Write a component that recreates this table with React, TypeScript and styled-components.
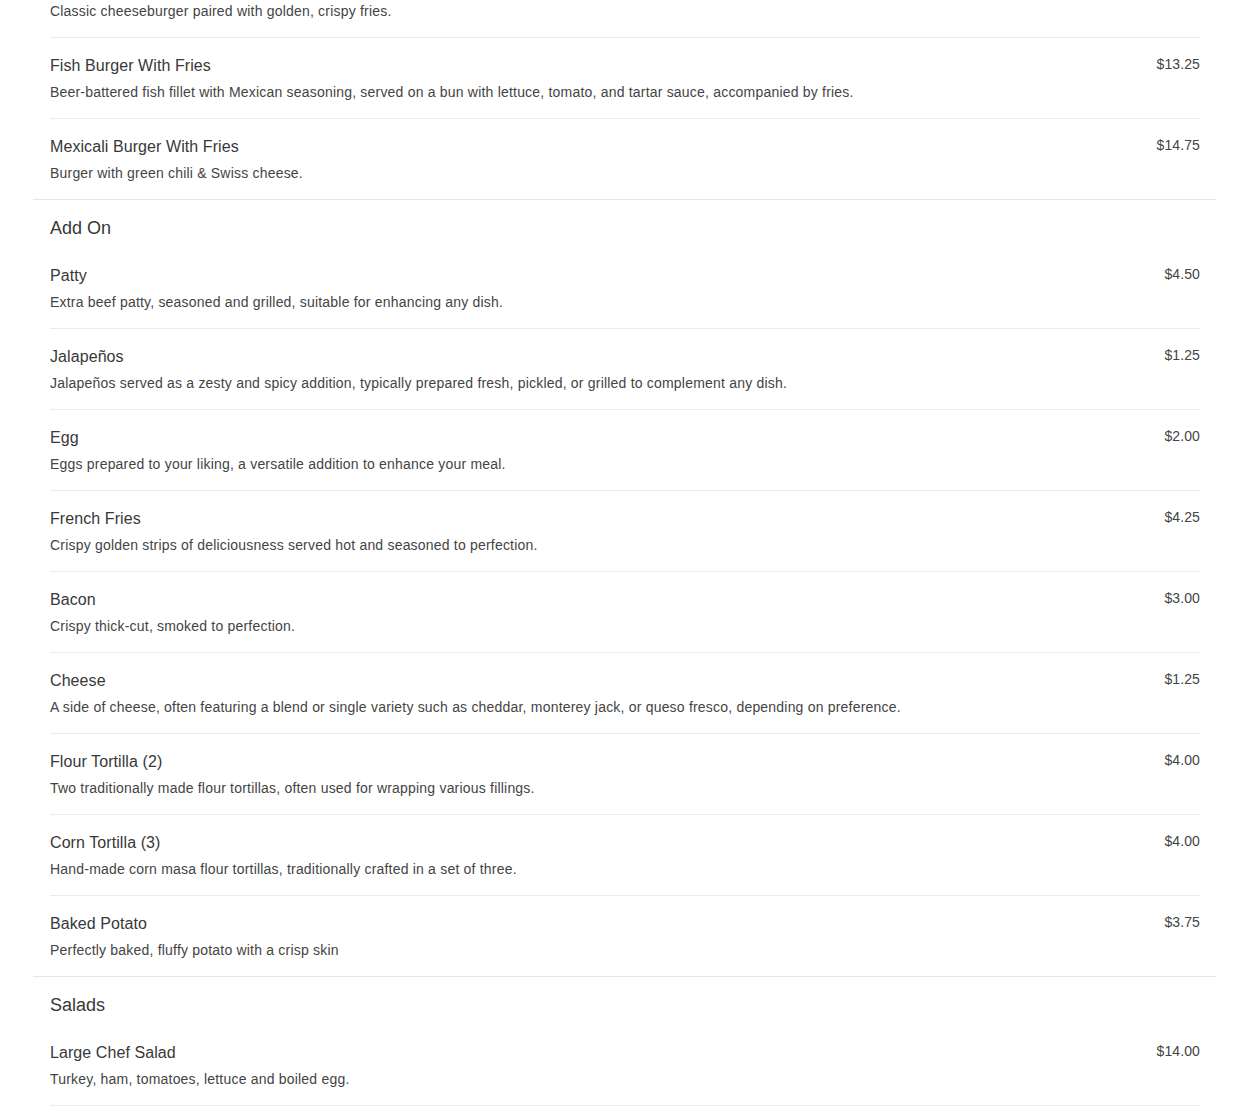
import React from 'react';
import styled, { createGlobalStyle } from 'styled-components';

const GlobalStyle = createGlobalStyle`
  html, body {
    margin: 0;
    padding: 0;
    background: #fff;
  }
  body {
    font-family: "Liberation Sans", Arial, Helvetica, sans-serif;
    color: #333;
    overflow: hidden;
  }
`;

const Page = styled.div`
  width: 1250px;
  height: 1115px;
  overflow: hidden;
`;

// the screenshot is scrolled part-way into the menu
const Menu = styled.div`
  margin: -43px 34px 0 33px;
`;

const Section = styled.section`
  border-bottom: 1px solid #e6e6e6;
`;

const SectionTitle = styled.h3`
  margin: 0;
  padding: 17px 17px 9px;
  font-size: 18px;
  line-height: 22px;
  font-weight: 400;
  color: #383838;
`;

const Items = styled.div`
  padding: 0 16px 0 17px;
`;

const Item = styled.div`
  display: flex;
  justify-content: space-between;
  align-items: flex-start;
  padding: 18px 0 16px;
  border-bottom: 1px solid #ebebeb;

  &:last-child {
    border-bottom: none;
  }
`;

const Info = styled.div`
  display: flex;
  flex-direction: column;
  gap: 6px;
`;

const Name = styled.div`
  font-size: 16px;
  line-height: 20px;
  letter-spacing: 0.08px;
  color: #383838;
`;

const Desc = styled.div`
  font-size: 14px;
  line-height: 20px;
  letter-spacing: 0.2px;
  color: #444;
`;

const Price = styled.div`
  font-size: 14px;
  line-height: 16px;
  letter-spacing: 0.1px;
  color: #444;
  white-space: nowrap;
`;

type MenuItem = { name: string; desc: string; price: string };
type MenuSection = { title?: string; items: MenuItem[] };

const sections: MenuSection[] = [
  {
    items: [
      { name: 'Cheeseburger With Fries', desc: 'Classic cheeseburger paired with golden, crispy fries.', price: '$13.50' },
      {
        name: 'Fish Burger With Fries',
        desc: 'Beer-battered fish fillet with Mexican seasoning, served on a bun with lettuce, tomato, and tartar sauce, accompanied by fries.',
        price: '$13.25',
      },
      { name: 'Mexicali Burger With Fries', desc: 'Burger with green chili & Swiss cheese.', price: '$14.75' },
    ],
  },
  {
    title: 'Add On',
    items: [
      { name: 'Patty', desc: 'Extra beef patty, seasoned and grilled, suitable for enhancing any dish.', price: '$4.50' },
      {
        name: 'Jalapeños',
        desc: 'Jalapeños served as a zesty and spicy addition, typically prepared fresh, pickled, or grilled to complement any dish.',
        price: '$1.25',
      },
      { name: 'Egg', desc: 'Eggs prepared to your liking, a versatile addition to enhance your meal.', price: '$2.00' },
      { name: 'French Fries', desc: 'Crispy golden strips of deliciousness served hot and seasoned to perfection.', price: '$4.25' },
      { name: 'Bacon', desc: 'Crispy thick-cut, smoked to perfection.', price: '$3.00' },
      {
        name: 'Cheese',
        desc: 'A side of cheese, often featuring a blend or single variety such as cheddar, monterey jack, or queso fresco, depending on preference.',
        price: '$1.25',
      },
      { name: 'Flour Tortilla (2)', desc: 'Two traditionally made flour tortillas, often used for wrapping various fillings.', price: '$4.00' },
      { name: 'Corn Tortilla (3)', desc: 'Hand-made corn masa flour tortillas, traditionally crafted in a set of three.', price: '$4.00' },
      { name: 'Baked Potato', desc: 'Perfectly baked, fluffy potato with a crisp skin', price: '$3.75' },
    ],
  },
  {
    title: 'Salads',
    items: [
      { name: 'Large Chef Salad', desc: 'Turkey, ham, tomatoes, lettuce and boiled egg.', price: '$14.00' },
      { name: 'Small Chef Salad', desc: 'Turkey, ham, tomatoes, lettuce and boiled egg.', price: '$10.50' },
    ],
  },
];

const App = () => {
  return (
    <Page>
      <GlobalStyle />
      <Menu>
        {sections.map((section, i) => (
          <Section key={i}>
            {section.title && <SectionTitle>{section.title}</SectionTitle>}
            <Items>
              {section.items.map((item) => (
                <Item key={item.name}>
                  <Info>
                    <Name>{item.name}</Name>
                    <Desc>{item.desc}</Desc>
                  </Info>
                  <Price>{item.price}</Price>
                </Item>
              ))}
            </Items>
          </Section>
        ))}
      </Menu>
    </Page>
  );
};

export default App;
